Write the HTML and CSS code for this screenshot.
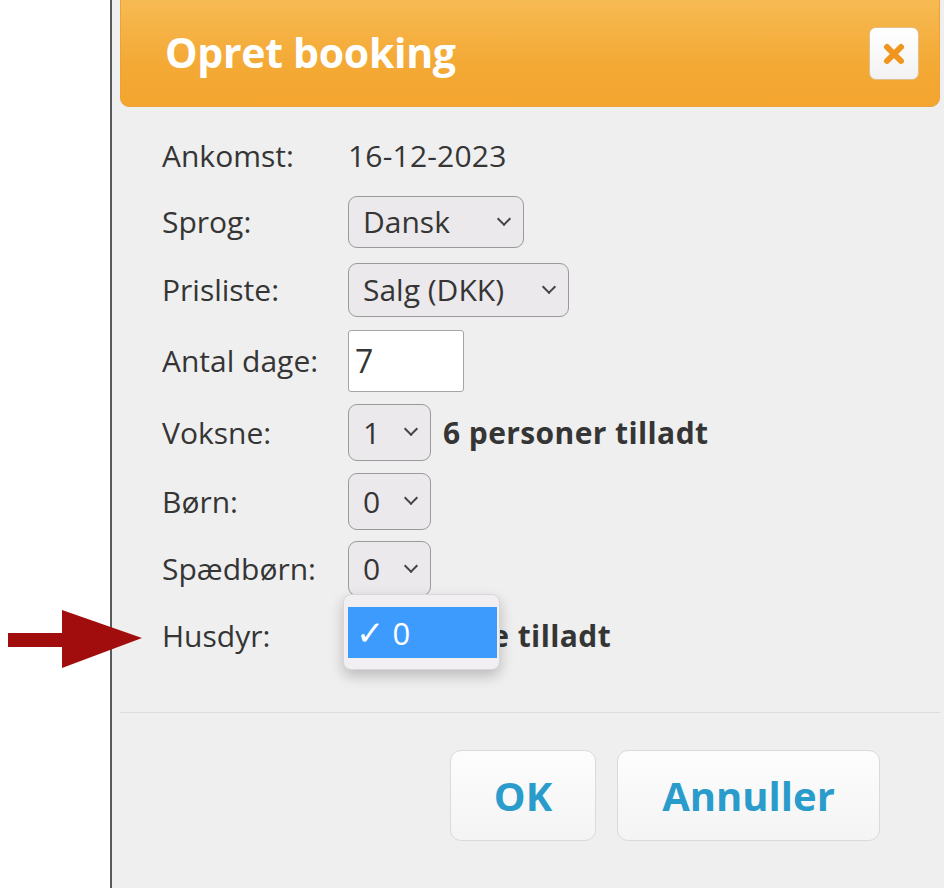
FILE: index.html
```html
<!DOCTYPE html>
<html lang="da">
<head>
<meta charset="utf-8">
<title>Opret booking</title>
<link rel="stylesheet" href="styles.css">
</head>
<body>
<div class="page">
  <div class="gutter">
    <svg class="arrow" width="140" height="60" viewBox="0 0 140 60">
      <rect x="0" y="23" width="56" height="14" fill="#a10c0c"/>
      <polygon points="54,0 134,28 54,58" fill="#a10c0c"/>
    </svg>
  </div>
  <div class="dialog">
    <div class="header">
      <span class="title">Opret booking</span>
      <span class="close">
        <svg width="24" height="24" viewBox="0 0 24 24"><path d="M5 5 L19 19 M19 5 L5 19" stroke="#f0961e" stroke-width="6" stroke-linecap="round"/></svg>
      </span>
    </div>
    <div class="form">
      <div class="row r1"><span class="label">Ankomst:</span><span class="value">16-12-2023</span></div>
      <div class="row r2"><span class="label">Sprog:</span><span class="select w-sprog">Dansk<i class="chev"></i></span></div>
      <div class="row r3"><span class="label">Prisliste:</span><span class="select w-pris">Salg (DKK)<i class="chev"></i></span></div>
      <div class="row r4"><span class="label">Antal dage:</span><span class="input">7</span></div>
      <div class="row r5"><span class="label">Voksne:</span><span class="select w-num">1<i class="chev"></i></span><span class="note">6 personer tilladt</span></div>
      <div class="row r6"><span class="label">Børn:</span><span class="select w-num">0<i class="chev"></i></span></div>
      <div class="row r7"><span class="label">Spædbørn:</span><span class="select w-num">0<i class="chev"></i></span></div>
      <div class="row r8"><span class="label">Husdyr:</span><span class="select w-num">0<i class="chev"></i></span><span class="note">Ikke tilladt</span>
        <div class="popup"><div class="option"><span class="check">✓</span>0</div></div>
      </div>
    </div>
    <div class="sep"></div>
    <div class="buttons">
      <span class="btn btn-ok">OK</span>
      <span class="btn btn-cancel">Annuller</span>
    </div>
  </div>
</div>
</body>
</html>
```

FILE: styles.css
```css
html, body {
  margin: 0;
  padding: 0;
  background: #ffffff;
  overflow: hidden;
}
.page {
  display: flex;
  width: 944px;
  height: 888px;
  font-family: "Open Sans", Lato, sans-serif;
  color: #353535;
}
.gutter {
  width: 110px;
  flex: none;
  position: relative;
}
.arrow {
  position: absolute;
  left: 8px;
  top: 610px;
}
.dialog {
  flex: 1;
  border-left: 2px solid #5a5a5a;
  background: #efefef;
  padding: 0 4px 0 8px;
  display: flex;
  flex-direction: column;
}
.header {
  margin-top: -8px;
  height: 115px;
  box-sizing: border-box;
  border-radius: 9px;
  border: 1px solid #e8a33a;
  background: linear-gradient(#f7bc56, #f4aa36 60%, #f3a52f);
  display: flex;
  align-items: center;
  justify-content: space-between;
  padding: 4px 20px 0 44px;
}
.title {
  color: #ffffff;
  font-weight: 700;
  font-size: 41px;
  letter-spacing: -0.3px;
}
.close {
  width: 50px;
  height: 53px;
  margin-top: 4px;
  box-sizing: border-box;
  border-radius: 7px;
  background: linear-gradient(#ffffff, #f2f2f2);
  border: 1px solid #e0c08a;
  display: flex;
  align-items: center;
  justify-content: center;
}
.form {
  padding: 16px 0 0 42px;
  display: flex;
  flex-direction: column;
}
.row {
  display: flex;
  align-items: center;
  font-size: 30px;
  position: relative;
}
.r1 { height: 65px; }
.r2 { height: 67px; }
.r3 { height: 69px; }
.r4 { height: 73px; }
.r5 { height: 70px; }
.r6 { height: 68px; }
.r7 { height: 67px; }
.r8 { height: 66px; }
.label {
  width: 186px;
  flex: none;
}
.value {
  letter-spacing: 0.2px;
}
.select {
  box-sizing: border-box;
  height: 54px;
  border: 1.5px solid #9a9a9a;
  border-radius: 9px;
  background: #ebe9eb;
  display: flex;
  align-items: center;
  justify-content: space-between;
  padding: 0 14px 0 14px;
}
.w-sprog { width: 176px; height: 52px; }
.w-pris { width: 221px; }
.w-num { width: 83px; height: 57px; }
.r7 .w-num, .r8 .w-num { height: 55px; }
.chev {
  width: 8px;
  height: 8px;
  border-right: 2px solid #444;
  border-bottom: 2px solid #444;
  transform: rotate(45deg);
  margin-top: -6px;
}
.input {
  box-sizing: border-box;
  width: 116px;
  height: 62px;
  background: #ffffff;
  border: 1.5px solid #a5a5a5;
  border-radius: 3px;
  display: flex;
  align-items: center;
  padding-left: 6px;
  font-size: 32px;
}
.note {
  margin-left: 12px;
  font-weight: 700;
  letter-spacing: 0.4px;
}
.popup {
  position: absolute;
  left: 181px;
  top: -8px;
  width: 157px;
  height: 76px;
  box-sizing: border-box;
  background: #f1eff1;
  border: 1px solid #d8d6d8;
  border-radius: 8px;
  box-shadow: 0 6px 14px rgba(0,0,0,0.22);
  padding: 12px 2px 0 4px;
}
.option {
  height: 51px;
  background: #3d9bfe;
  color: #ffffff;
  display: flex;
  align-items: center;
  padding-left: 8px;
  font-size: 31px;
}
.check {
  font-family: "DejaVu Sans", sans-serif;
  font-size: 34px;
  margin-right: 8px;
}
.sep {
  margin-top: 44px;
  height: 1px;
  background: #dcdcdc;
}
.buttons {
  display: flex;
  justify-content: flex-end;
  gap: 21px;
  padding: 37px 60px 0 0;
}
.btn {
  box-sizing: border-box;
  height: 91px;
  border: 1.5px solid #dadada;
  border-radius: 11px;
  background: linear-gradient(#fdfdfd, #f4f4f4);
  display: flex;
  align-items: center;
  justify-content: center;
  color: #2a9ccb;
  font-weight: 700;
  font-size: 40px;
}
.btn-ok { width: 146px; }
.btn-cancel { width: 263px; }
```
